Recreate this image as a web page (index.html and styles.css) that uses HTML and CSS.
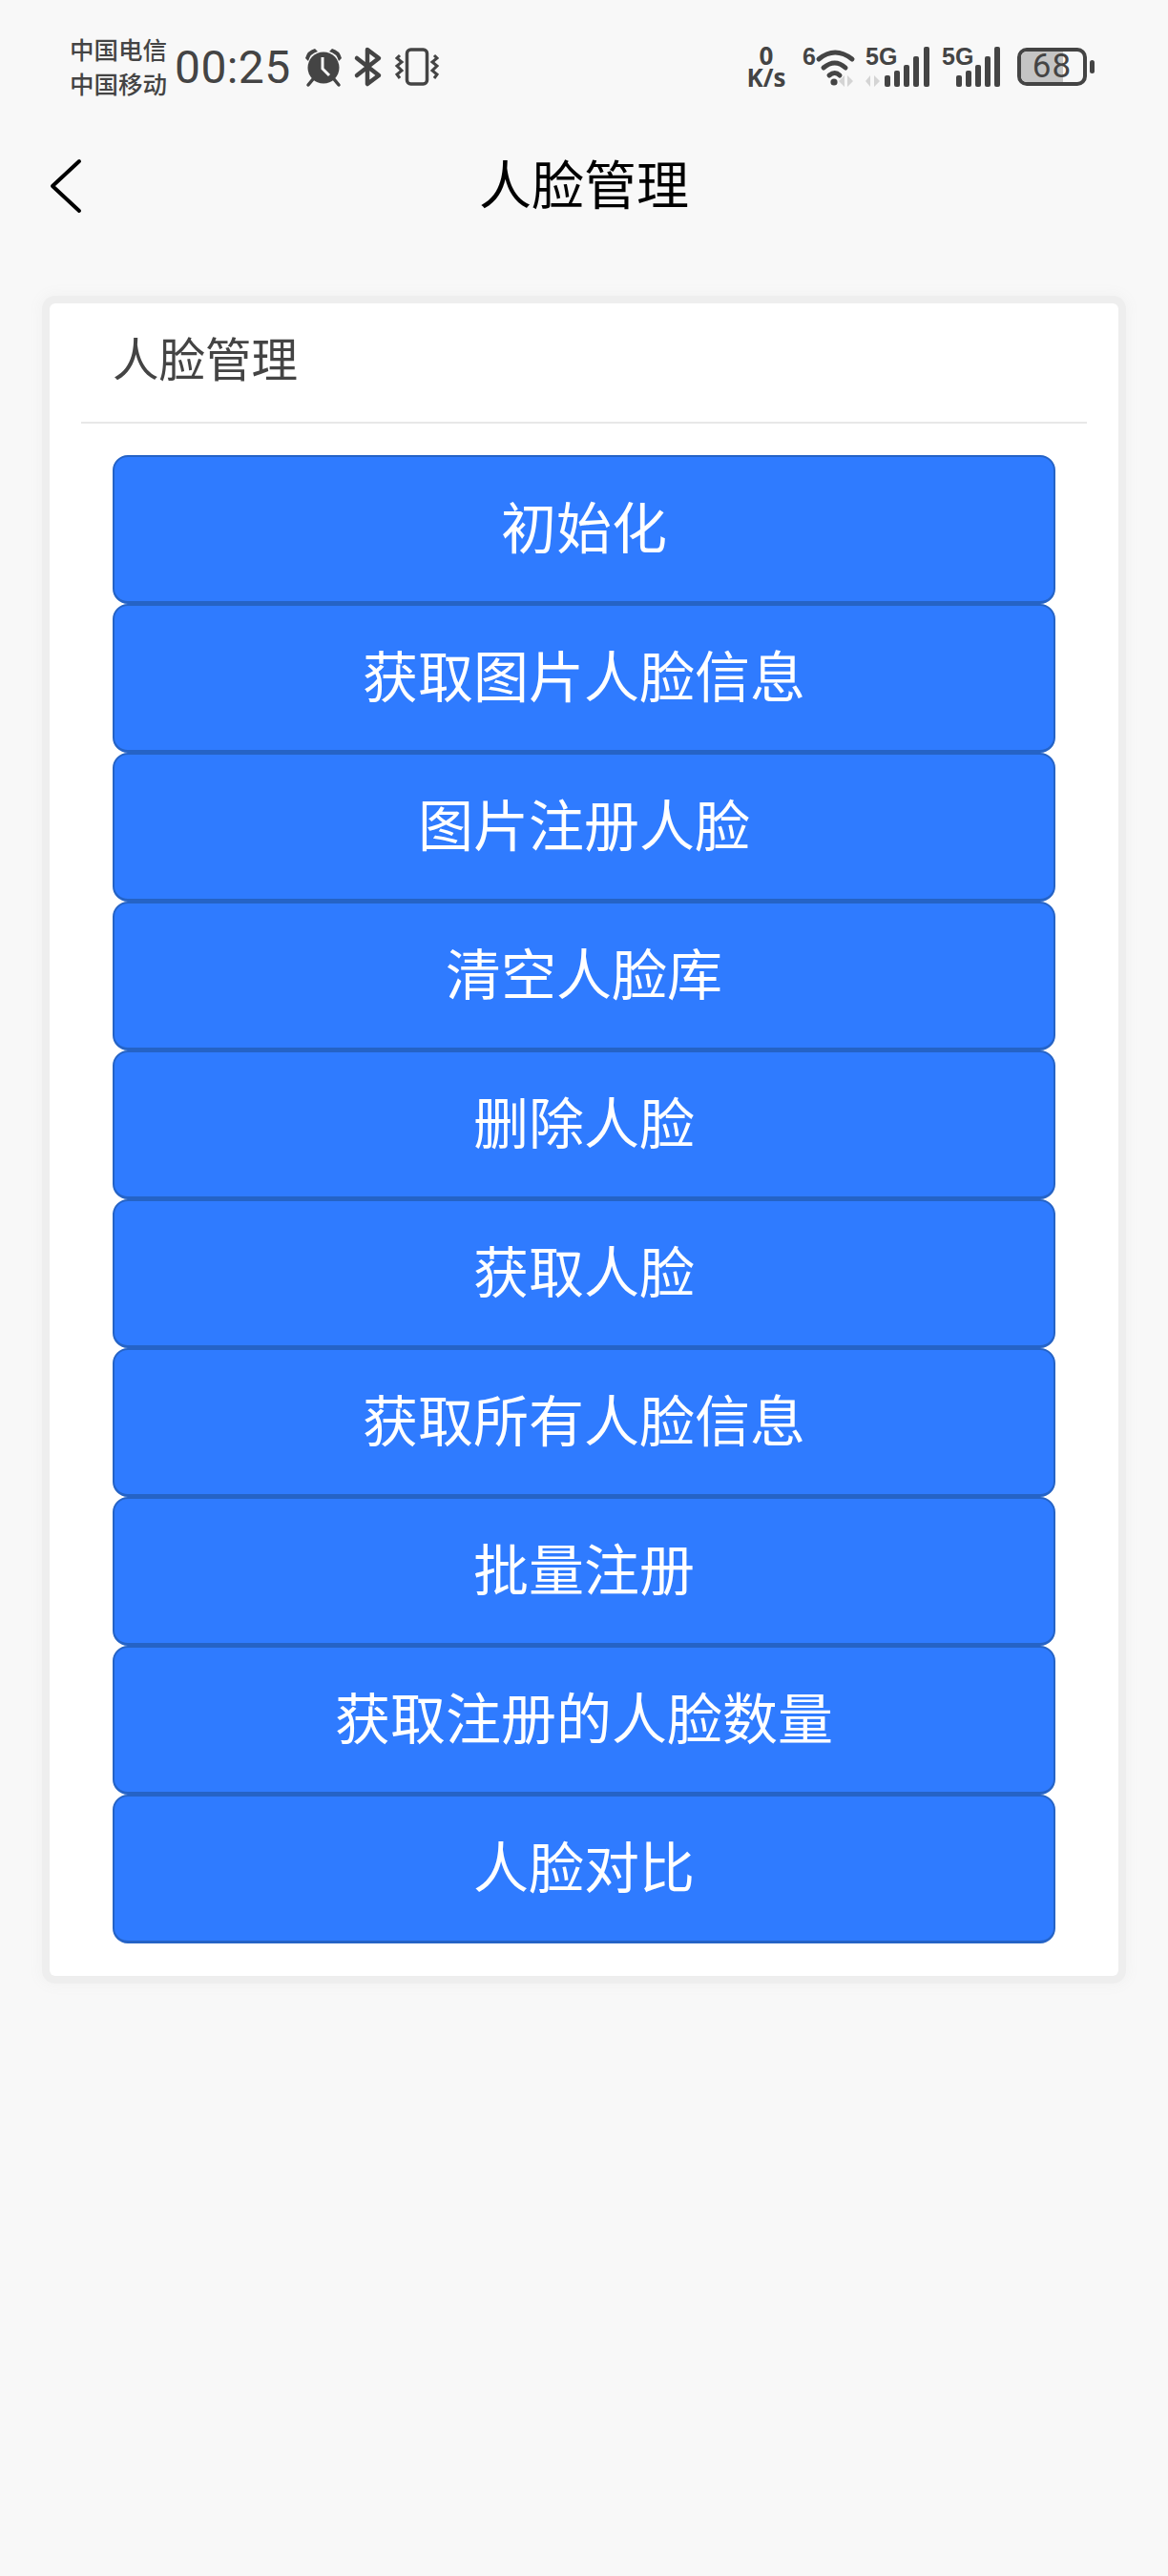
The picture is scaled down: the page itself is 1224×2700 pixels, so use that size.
FILE: index.html
```html
<!DOCTYPE html>
<html lang="zh-CN">
<head>
<meta charset="UTF-8">
<meta name="viewport" content="width=device-width, initial-scale=1.0">
<title>人脸管理</title>
<link rel="stylesheet" href="styles.css">
</head>
<body>

<div class="statusbar">
  <div class="status-left">
    <div class="carriers"><span>中国电信</span><span>中国移动</span></div>
    <span class="clock">00:25</span>
    <svg class="ic-alarm" width="40" height="40" viewBox="0 0 40 40">
      <circle cx="20" cy="21" r="16.5" fill="#444"/>
      <path d="M1 11 Q3 3 11 1 L14 4 Q6 6 4 14Z M39 11 Q37 3 29 1 L26 4 Q34 6 36 14Z" fill="#444"/>
      <path d="M9 33 L4 39 M31 33 L36 39" stroke="#444" stroke-width="3.5" stroke-linecap="round"/>
      <path d="M19 10 V22 L26 29" stroke="#f8f8f8" stroke-width="3" fill="none"/>
    </svg>
    <svg class="ic-bt" width="28" height="40" viewBox="0 0 28 40">
      <path d="M2 11 L25 29 L13 38 V2 L25 11 L2 29" stroke="#444" stroke-width="4.5" fill="none" stroke-linejoin="round" stroke-linecap="round"/>
    </svg>
    <svg class="ic-vibrate" width="46" height="40" viewBox="0 0 46 40">
      <rect x="12.5" y="2" width="21" height="36" rx="4" fill="none" stroke="#444" stroke-width="3.5"/>
      <path d="M5 8 L2 11 L7 15 L2 19 L7 24 L2 28 L5 32 M41 8 L44 11 L39 15 L44 19 L39 24 L44 28 L41 32" fill="none" stroke="#444" stroke-width="3"/>
    </svg>
  </div>
  <div class="status-right">
    <svg class="ic-speed" width="42" height="44" viewBox="0 0 42 44">
      <text x="21" y="20" class="speed-label">0</text>
      <text x="21" y="43" class="speed-label">K/s</text>
    </svg>
    <svg class="ic-wifi" width="55" height="44" viewBox="0 0 55 44">
      <text x="0" y="20" class="svg-label">6</text>
      <path d="M17 14 Q34 0 52 14" fill="none" stroke="#444" stroke-width="5" stroke-linecap="round"/>
      <path d="M22 23 Q34 13 45 23" fill="none" stroke="#444" stroke-width="5" stroke-linecap="round"/>
      <path d="M28 31 Q34 26 39 31" fill="none" stroke="#444" stroke-width="5" stroke-linecap="round"/>
      <circle cx="33" cy="38" r="3.6" fill="#444"/>
      <path d="M44 31 V43 L38 37Z M47 31 V43 L53 37Z" fill="#d4d4d4"/>
    </svg>
    <svg class="ic-signal" width="67" height="44" viewBox="0 0 67 44">
      <text x="0" y="20" class="svg-label">5G</text>
      <path d="M5 31 V43 L0 37Z M9 31 V43 L15 37Z" fill="#d4d4d4"/>
      <rect x="20" y="31" width="6" height="12" rx="2" fill="#444"/>
      <rect x="30" y="26" width="6" height="17" rx="2" fill="#444"/>
      <rect x="40" y="20" width="6" height="23" rx="2" fill="#444"/>
      <rect x="50" y="11" width="6" height="32" rx="2" fill="#444"/>
      <rect x="61" y="1" width="6" height="42" rx="2" fill="#444"/>
    </svg>
    <svg class="ic-signal" width="61" height="44" viewBox="0 0 61 44">
      <text x="0" y="20" class="svg-label">5G</text>
      <rect x="15" y="31" width="6" height="12" rx="2" fill="#444"/>
      <rect x="25" y="26" width="6" height="17" rx="2" fill="#444"/>
      <rect x="35" y="20" width="6" height="23" rx="2" fill="#444"/>
      <rect x="45" y="11" width="6" height="32" rx="2" fill="#444"/>
      <rect x="55" y="1" width="6" height="42" rx="2" fill="#444"/>
    </svg>
    <div class="battery">
      <div class="battery-body"><div class="battery-fill" style="width: 68%"></div><span class="battery-num">68</span></div>
      <div class="battery-tip"></div>
    </div>
  </div>
</div>

<div class="navbar">
  <svg class="back" width="34" height="58" viewBox="0 0 34 58">
    <path d="M31 3 L3 29 L31 55" fill="none" stroke="#000" stroke-width="4" stroke-linecap="round" stroke-linejoin="round"/>
  </svg>
  <h1 class="nav-title">人脸管理</h1>
</div>

<div class="card">
  <div class="card-header">人脸管理</div>
  <div class="btn-list">
    <button class="btn">初始化</button>
    <button class="btn">获取图片人脸信息</button>
    <button class="btn">图片注册人脸</button>
    <button class="btn">清空人脸库</button>
    <button class="btn">删除人脸</button>
    <button class="btn">获取人脸</button>
    <button class="btn">获取所有人脸信息</button>
    <button class="btn">批量注册</button>
    <button class="btn">获取注册的人脸数量</button>
    <button class="btn">人脸对比</button>
  </div>
</div>

</body>
</html>
```

FILE: styles.css
```css
* {
  padding: 0;
  margin: 0;
  box-sizing: border-box;
  font-family: "Noto Sans CJK SC", "Noto Sans", sans-serif;
}

body {
  width: 1224px;
  height: 2700px;
  overflow: hidden;
  background-color: #f8f8f8;
}

svg {
  overflow: visible;
}

.statusbar {
  display: flex;
  justify-content: space-between;
  align-items: center;
  height: 60px;
  margin-top: 40px;
  padding: 0 77px 0 73px;
  color: #444;
}

.status-left,
.status-right {
  display: flex;
  align-items: center;
}

.carriers {
  display: flex;
  flex-direction: column;
  font-size: 25.5px;
  font-weight: 500;
  line-height: 36px;
  margin-top: -3px;
}

.clock {
  margin-left: 8px;
  font-family: Roboto, sans-serif;
  font-size: 48px;
  font-weight: 450;
  letter-spacing: 0.4px;
}

.ic-alarm {
  margin-left: 14px;
}

.ic-bt {
  margin-left: 13px;
}

.ic-vibrate {
  margin-left: 14px;
}

.speed-label {
  font-family: "Open Sans", sans-serif;
  font-size: 26px;
  font-weight: 700;
  text-anchor: middle;
  fill: #444;
}

.svg-label {
  font-family: "Liberation Sans", sans-serif;
  font-size: 25px;
  font-weight: 700;
  fill: #444;
}

.ic-wifi {
  margin-left: 17px;
}

.ic-signal {
  margin-left: 11px;
}

.ic-signal + .ic-signal {
  margin-left: 13px;
}

.battery {
  display: flex;
  align-items: center;
  margin-left: 18px;
}

.battery-body {
  position: relative;
  width: 73px;
  height: 40px;
  border: 4px solid #444;
  border-radius: 10px;
  overflow: hidden;
}

.battery-fill {
  height: 100%;
  background-color: #c4c4c4;
}

.battery-num {
  position: absolute;
  top: 0;
  left: 0;
  width: 100%;
  font-family: Roboto, sans-serif;
  font-size: 35px;
  line-height: 32px;
  text-align: center;
  letter-spacing: 1px;
}

.battery-tip {
  width: 5px;
  height: 14px;
  margin-left: 3px;
  border-radius: 3px;
  background-color: #444;
}

.navbar {
  display: flex;
  align-items: center;
  justify-content: center;
  position: relative;
  height: 186px;
  padding-bottom: 6px;
}

.back {
  position: absolute;
  left: 52px;
  top: 66px;
}

.nav-title {
  font-size: 55px;
  font-weight: 400;
  color: #000;
}

.card {
  width: 1120px;
  margin: 32px 0 0 52px;
  border-radius: 6px;
  background-color: #fff;
  box-shadow: 0 0 0 8px #eee, 0 0 14px 10px #f2f2f2;
}

.card-header {
  height: 126px;
  margin: 0 33px;
  padding: 21px 0 0 33px;
  border-bottom: 2px solid #e8e8e8;
  font-size: 48.5px;
  line-height: 70px;
  color: #444;
}

.btn-list {
  display: flex;
  flex-direction: column;
  padding: 33px 66px 34px;
}

.btn {
  height: 156px;
  padding-bottom: 9px;
  border: 2px solid #2563c6;
  border-bottom-width: 3px;
  border-radius: 16px;
  background-color: #2f7bff;
  color: #fff;
  font-size: 58px;
}
```
